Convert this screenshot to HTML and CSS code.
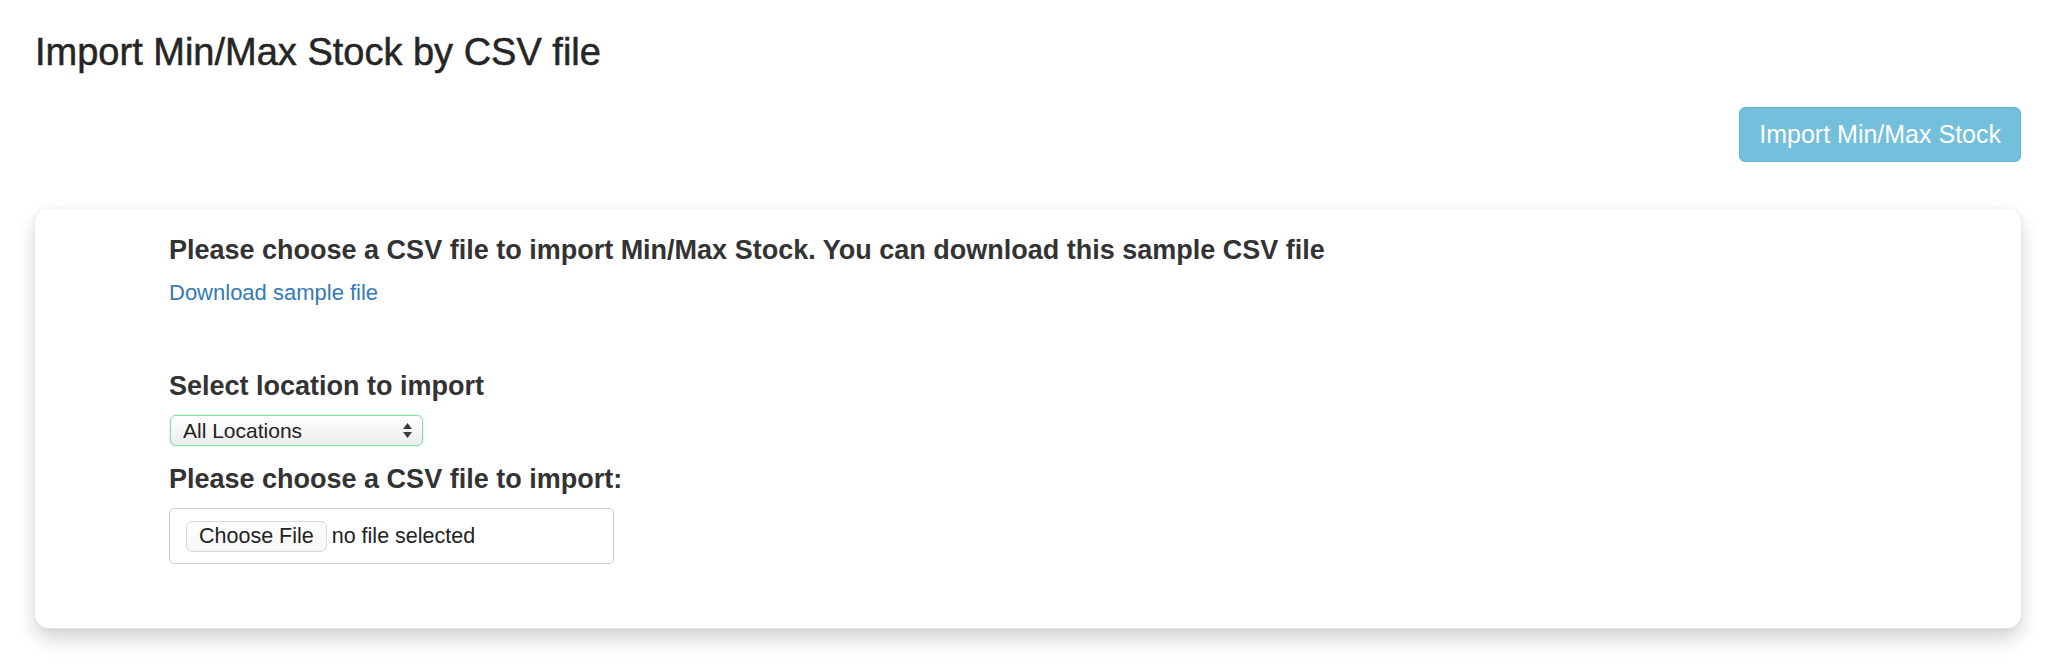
FILE: index.html
```html
<!DOCTYPE html>
<html lang="en">
<head>
<meta charset="utf-8">
<title>Import Min/Max Stock by CSV file</title>
<link rel="stylesheet" href="styles.css">
</head>
<body>
<div class="page">
  <h3 class="title">Import Min/Max Stock by CSV file</h3>
  <div class="actions">
    <button class="btn-import" type="button" disabled>Import Min/Max Stock</button>
  </div>
  <div class="card">
    <div class="card-body">
      <p class="lead">Please choose a CSV file to import Min/Max Stock. You can download this sample CSV file</p>
      <a class="sample-link" href="#">Download sample file</a>
      <label class="field-label">Select location to import</label>
      <div class="select-box">
        <span class="select-text">All Locations</span>
        <svg class="select-arrows" width="9" height="15" viewBox="0 0 9 15"><path d="M4.5 0 L9 6 L0 6 Z" fill="#3a3a3a"/><path d="M0 9 L9 9 L4.5 15 Z" fill="#3a3a3a"/></svg>
      </div>
      <label class="field-label">Please choose a CSV file to import:</label>
      <div class="file-box">
        <span class="file-btn">Choose File</span>
        <span class="file-name">no file selected</span>
      </div>
    </div>
  </div>
</div>
</body>
</html>
```
FILE: styles.css
```css
html, body {
  margin: 0;
  padding: 0;
  background: #ffffff;
}

body {
  font-family: "Liberation Sans", Arial, sans-serif;
  color: #333333;
}

.page {
  box-sizing: border-box;
  min-height: 670px;
  padding: 30px 31px 41px 35px;
}

.title {
  margin: 0;
  font-size: 38px;
  line-height: 44px;
  font-weight: normal;
  color: #252525;
  -webkit-text-stroke: 0.5px #252525;
}

.actions {
  display: flex;
  justify-content: flex-end;
  margin-top: 33px;
}

.btn-import {
  font-family: "Liberation Sans", Arial, sans-serif;
  font-size: 25px;
  line-height: 31px;
  padding: 11px 19px;
  border: 1px solid #62b6d6;
  border-radius: 6px;
  background: #73bfdc;
  color: #ffffff;
  cursor: not-allowed;
}

.card {
  margin-top: 47px;
  background: #ffffff;
  border-radius: 14px;
  border-bottom: 1px solid #e4e4e4;
  box-shadow: 0 10px 20px rgba(0, 0, 0, 0.17), 0 0 5px rgba(0, 0, 0, 0.06);
}

.card-body {
  display: flex;
  flex-direction: column;
  align-items: flex-start;
  padding: 25px 0 64px 134px;
}

.lead {
  margin: 0;
  font-size: 27px;
  line-height: 32px;
  font-weight: bold;
  color: #333333;
}

.sample-link {
  margin-top: 14px;
  font-size: 22px;
  line-height: 26px;
  color: #337ab7;
  text-decoration: none;
}

.field-label {
  margin-top: 64px;
  font-size: 27px;
  line-height: 32px;
  font-weight: bold;
  color: #333333;
}

.select-box + .field-label {
  margin-top: 17px;
}

.select-box {
  margin-top: 13px;
  margin-left: 1px;
  box-sizing: border-box;
  width: 253px;
  height: 31px;
  display: flex;
  align-items: center;
  padding: 0 10px 0 12px;
  border: 1px solid #84deaa;
  border-radius: 6px;
  background: linear-gradient(#ffffff, #ececec);
  box-shadow: 0 0 2px rgba(100, 220, 150, 0.7);
  font-size: 21px;
  color: #222222;
}

.select-arrows {
  margin-left: auto;
}

.file-box {
  margin-top: 13px;
  box-sizing: border-box;
  width: 445px;
  height: 56px;
  display: flex;
  align-items: center;
  padding-left: 16px;
  border: 1px solid #cccccc;
  border-radius: 5px;
  font-size: 21.5px;
  color: #222222;
}

.file-btn {
  box-sizing: border-box;
  height: 31px;
  display: flex;
  align-items: center;
  padding: 0 12px;
  border: 1px solid #d8d8d8;
  border-radius: 6px;
  background: linear-gradient(#ffffff, #f6f6f6);
}

.file-name {
  margin-left: 5px;
}
```
